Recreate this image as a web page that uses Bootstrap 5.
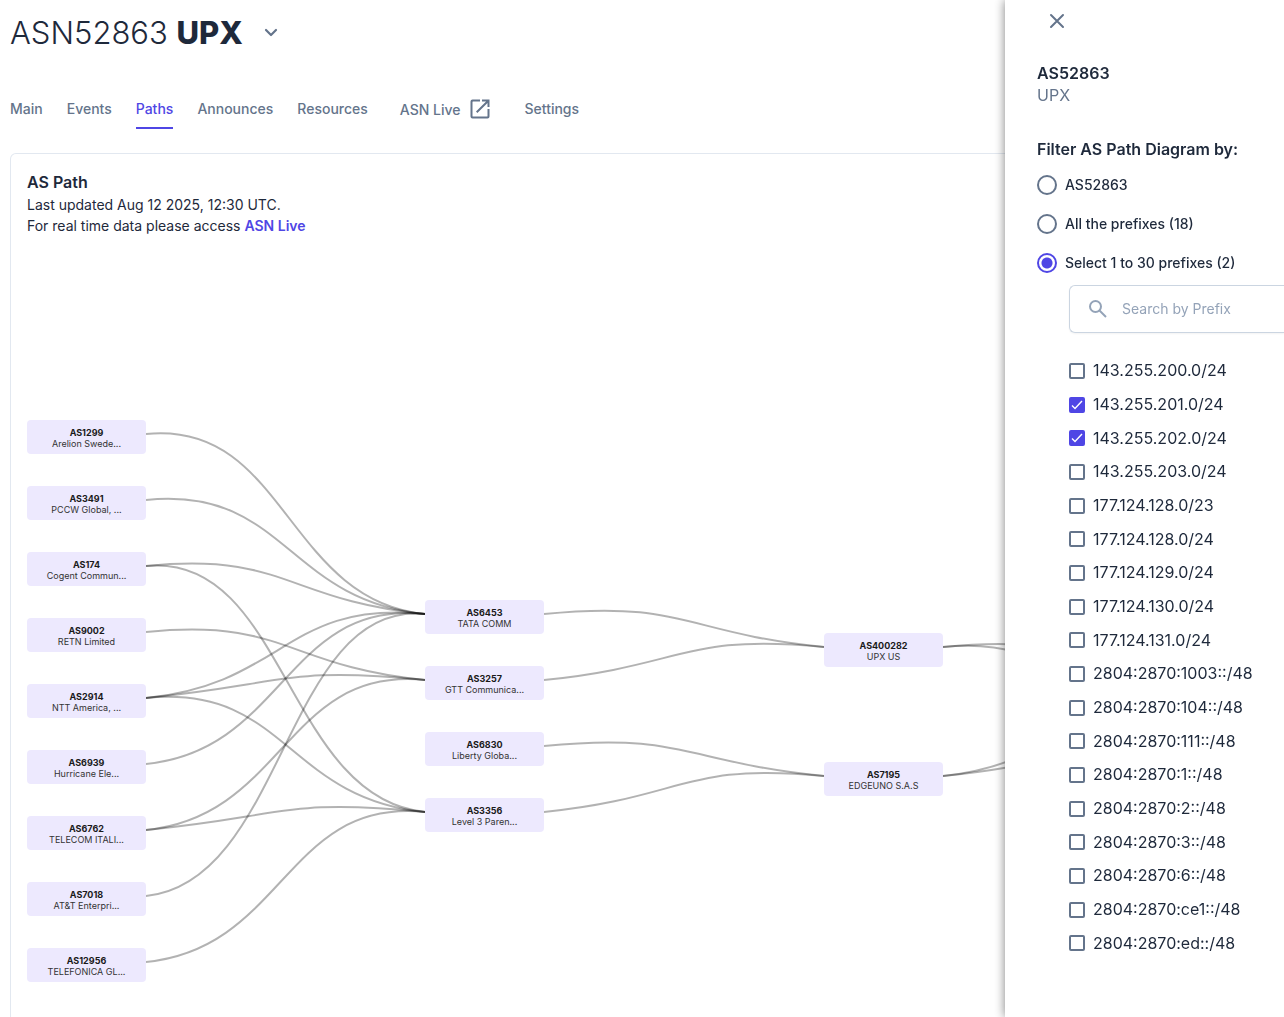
<!DOCTYPE html>
<html lang="en">
<head>
<meta charset="utf-8">
<meta name="viewport" content="width=device-width, initial-scale=1">
<title>ASN52863 UPX</title>
<link href="https://cdn.jsdelivr.net/npm/bootstrap@5.3.0/dist/css/bootstrap.min.css" rel="stylesheet">
<style>
  body { font-family: Inter, "Liberation Sans", sans-serif; color: #1e293b; font-size: 14px; line-height: 21px; }
  .page { padding: 9px 8px 0 10px; }
  .asn-title { font-size: 31px; line-height: 47px; font-weight: 300; margin: 0; }
  .asn-title strong { font-weight: 800; }
  .plain-btn { border: 0; background: none; padding: 0; color: #64748b; line-height: 0; }
  .tabs { gap: 24px; margin-top: 32px; }
  .tabs .nav-link { padding: 10px 0 7px; height: 41px; border-bottom: 2px solid transparent; color: #64748b; font-weight: 500; }
  .tabs .nav-link.active { color: #4f46e5; border-color: #4f46e5; }
  .tabs .tab-live { margin: 0 8px; }
  .path-card { border: 1px solid #e2e8f0; border-bottom: 0; border-radius: 6px 6px 0 0; margin-top: 24px; padding: 16px 16px 0; }
  .section-title { font-size: 16px; line-height: 24px; font-weight: 600; margin: 0; }
  .path-card .info { font-weight: 400; margin: 0; }
  .live-link { color: #4f46e5; font-weight: 600; text-decoration: none; }
  .diagram { width: 1232px; height: 777px; margin-top: 4px; flex: none; }
  .diagram rect { fill: #ede9fe; }
  .diagram path { fill: none; stroke: #000; stroke-opacity: .3; stroke-width: 2; }
  .diagram text { font-size: 9px; text-anchor: middle; fill: #333; }
  .diagram .asn { font-weight: 700; fill: #1a1a1a; }
  .offcanvas.filter-panel { --bs-offcanvas-width: 279px; border: 0; color: #1e293b; box-shadow: 0 0 10px rgba(0,0,0,.5); padding: 9px 0 0 32px; overflow: hidden; outline: 0; }
  .close-btn { margin-left: 8px; width: 24px; height: 24px; }
  .panel-head { margin-top: 28px; }
  .panel-sub { font-size: 16px; line-height: 21px; color: #64748b; }
  .filter-title { margin-top: 31px; }
  .choice { height: 39px; gap: 8px; font-weight: 500; }
  .choice .form-check-input { width: 20px; height: 20px; margin: 0; border: 2px solid #64748b; }
  .form-check-input:checked { background-color: #4f46e5; border-color: #4f46e5; }
  .choice .form-check-input:checked { background: radial-gradient(circle, #4f46e5 5px, #fff 6px); border-color: #4f46e5; }
  .search-box { margin: 3px 0 0 32px; height: 48px; border: 1px solid #cbd5e1; border-right: 0; border-radius: 6px 0 0 6px; padding-left: 16px; gap: 12px; color: #94a3b8; box-shadow: 0 1px 2px rgba(0,0,0,.05); flex: none; }
  .search-box .form-control { border: 0; padding: 0; font-size: 14px; line-height: 20px; }
  .search-box .form-control::placeholder { color: #94a3b8; }
  .prefix-list { margin: 21px 0 0 32px; height: 606px; flex: none; font-size: 16px; }
  .prefix-list label { gap: 8px; }
  .prefix-list .form-check-input { width: 16px; height: 16px; margin: 0; border: 2px solid #64748b; border-radius: 2px; }
  .prefix-list .form-check-input:checked { border-color: #4f46e5; background-size: 16px; background-image: url("data:image/svg+xml,%3Csvg xmlns='http://www.w3.org/2000/svg' viewBox='0 0 16 16'%3E%3Cpath d='M3 8.5l3 3 7-7.5' fill='none' stroke='white' stroke-width='1.4'/%3E%3C/svg%3E"); }
</style>
<script src="https://cdn.jsdelivr.net/npm/bootstrap@5.3.0/dist/js/bootstrap.bundle.min.js"></script>
</head>
<body>
<main class="page d-flex flex-column vh-100 overflow-hidden">
  <header class="d-flex align-items-center gap-3">
    <h1 class="asn-title">ASN52863 <strong>UPX</strong></h1>
    <button class="plain-btn" type="button" aria-label="Switch network">
      <svg width="24" height="24" viewBox="0 0 24 24" fill="none" stroke="currentColor" stroke-width="2.2" stroke-linecap="round" stroke-linejoin="round"><path d="M7 9l5 5 5-5"/></svg>
    </button>
  </header>
  <nav class="nav tabs flex-nowrap">
    <a class="nav-link" href="#">Main</a>
    <a class="nav-link" href="#">Events</a>
    <a class="nav-link active" aria-current="page" href="#">Paths</a>
    <a class="nav-link" href="#">Announces</a>
    <a class="nav-link" href="#">Resources</a>
    <a class="nav-link tab-live d-flex align-items-center gap-2" href="#">ASN Live
      <svg width="24" height="24" viewBox="0 0 24 24" fill="currentColor"><path d="M19 19.500H5a.5.5 0 0 1-.5-.5V5a.5.5 0 0 1 .5-.5h7v-2H4.500a2 2 0 0 0-2 2v15a2 2 0 0 0 2 2h15a2 2 0 0 0 2-2V12h-2v7a.5.5 0 0 1-.5.5zM14 2.500v2h4.100L8 14.600 9.400 16 19.500 5.900V10h2V2.500H14z"/></svg>
    </a>
    <a class="nav-link" href="#">Settings</a>
  </nav>
  <section class="path-card d-flex flex-column flex-fill overflow-hidden">
    <h2 class="section-title">AS Path</h2>
    <p class="info">Last updated Aug 12 2025, 12:30 UTC.</p>
    <p class="info">For real time data please access <a class="live-link" href="#">ASN Live</a></p>
    <svg class="diagram" id="diagram" viewBox="0 0 1232 777" role="img" aria-label="AS path diagram"></svg>
  </section>
</main>

<aside class="offcanvas offcanvas-end show filter-panel" data-bs-backdrop="false" data-bs-scroll="true" tabindex="-1" aria-label="Filter">
  <button class="plain-btn close-btn" type="button" aria-label="Close">
    <svg width="24" height="24" viewBox="0 0 24 24" fill="none" stroke="currentColor" stroke-width="2" stroke-linecap="round"><path d="M6 6l12 12M18 6L6 18"/></svg>
  </button>
  <h2 class="section-title panel-head">AS52863</h2>
  <div class="panel-sub">UPX</div>
  <h3 class="section-title filter-title">Filter AS Path Diagram by:</h3>
  <div class="d-flex flex-column pt-1">
    <label class="choice d-flex align-items-center"><input class="form-check-input" type="radio" name="mode">AS52863</label>
    <label class="choice d-flex align-items-center"><input class="form-check-input" type="radio" name="mode">All the prefixes (18)</label>
    <label class="choice d-flex align-items-center"><input class="form-check-input" type="radio" name="mode" checked>Select 1 to 30 prefixes (2)</label>
  </div>
  <div class="search-box d-flex align-items-center">
    <svg class="flex-shrink-0" width="24" height="24" viewBox="0 0 24 24" fill="none" stroke="currentColor" stroke-width="2"><circle cx="9.500" cy="9.500" r="5.500"/><path d="M13.500 13.500l6.500 6.500"/></svg>
    <input class="form-control shadow-none" type="text" placeholder="Search by Prefix" aria-label="Search by Prefix">
  </div>
  <div class="prefix-list d-flex flex-column" id="prefixes"></div>
</aside>

<script>
  const prefixes = ["143.255.200.0/24", "143.255.201.0/24", "143.255.202.0/24", "143.255.203.0/24",
    "177.124.128.0/23", "177.124.128.0/24", "177.124.129.0/24", "177.124.130.0/24", "177.124.131.0/24",
    "2804:2870:1003::/48", "2804:2870:104::/48", "2804:2870:111::/48", "2804:2870:1::/48", "2804:2870:2::/48",
    "2804:2870:3::/48", "2804:2870:6::/48", "2804:2870:ce1::/48", "2804:2870:ed::/48"];
  const selected = [1, 2];
  document.getElementById("prefixes").innerHTML = prefixes.map((p, i) =>
    `<label class="d-flex align-items-center flex-fill"><input class="form-check-input" type="checkbox"${selected.includes(i) ? " checked" : ""}>${p}</label>`).join("");

  // Each node: AS number, name, column, top edge
  const nodes = [
    ["AS1299", "Arelion Swede...", 0, 180], ["AS3491", "PCCW Global, ...", 0, 246],
    ["AS174", "Cogent Commun...", 0, 312], ["AS9002", "RETN Limited", 0, 378],
    ["AS2914", "NTT America, ...", 0, 444], ["AS6939", "Hurricane Ele...", 0, 510],
    ["AS6762", "TELECOM ITALI...", 0, 576], ["AS7018", "AT&amp;T Enterpri...", 0, 642],
    ["AS12956", "TELEFONICA GL...", 0, 708],
    ["AS6453", "TATA COMM", 1, 360], ["AS3257", "GTT Communica...", 1, 426],
    ["AS6830", "Liberty Globa...", 1, 492], ["AS3356", "Level 3 Paren...", 1, 558],
    ["AS400282", "UPX US", 2, 393], ["AS7195", "EDGEUNO S.A.S", 2, 522]];
  const columns = [0, 398, 797, 1195], width = 119, lift = 14;
  // Each link: source column, source top, target top
  const links = [[0,180,360],[0,246,360],[0,312,360],[0,312,558],[0,378,426],[0,444,360],[0,444,426],[0,444,558],
    [0,510,360],[0,576,426],[0,576,558],[0,642,360],[0,708,558],
    [1,360,393],[1,426,393],[1,492,522],[1,558,522],
    [2,393,430],[2,393,496],[2,522,430],[2,522,496]];
  document.getElementById("diagram").innerHTML =
    links.map(([c, a, b]) => {
      const x0 = columns[c] + width, x1 = columns[c + 1], xm = (x0 + x1) / 2, y0 = a + 14, y1 = b + 14;
      return `<path d="M${x0} ${y0}C${xm} ${y0 - lift} ${xm} ${y1 - lift} ${x1} ${y1}"/>`;
    }).join("") +
    nodes.map(([asn, name, c, y]) => {
      const x = columns[c], cx = x + width / 2;
      return `<rect x="${x}" y="${y}" width="${width}" height="34" rx="4"/><text class="asn" x="${cx}" y="${y + 16}">${asn}</text><text x="${cx}" y="${y + 27}">${name}</text>`;
    }).join("");
</script>
</body>
</html>
